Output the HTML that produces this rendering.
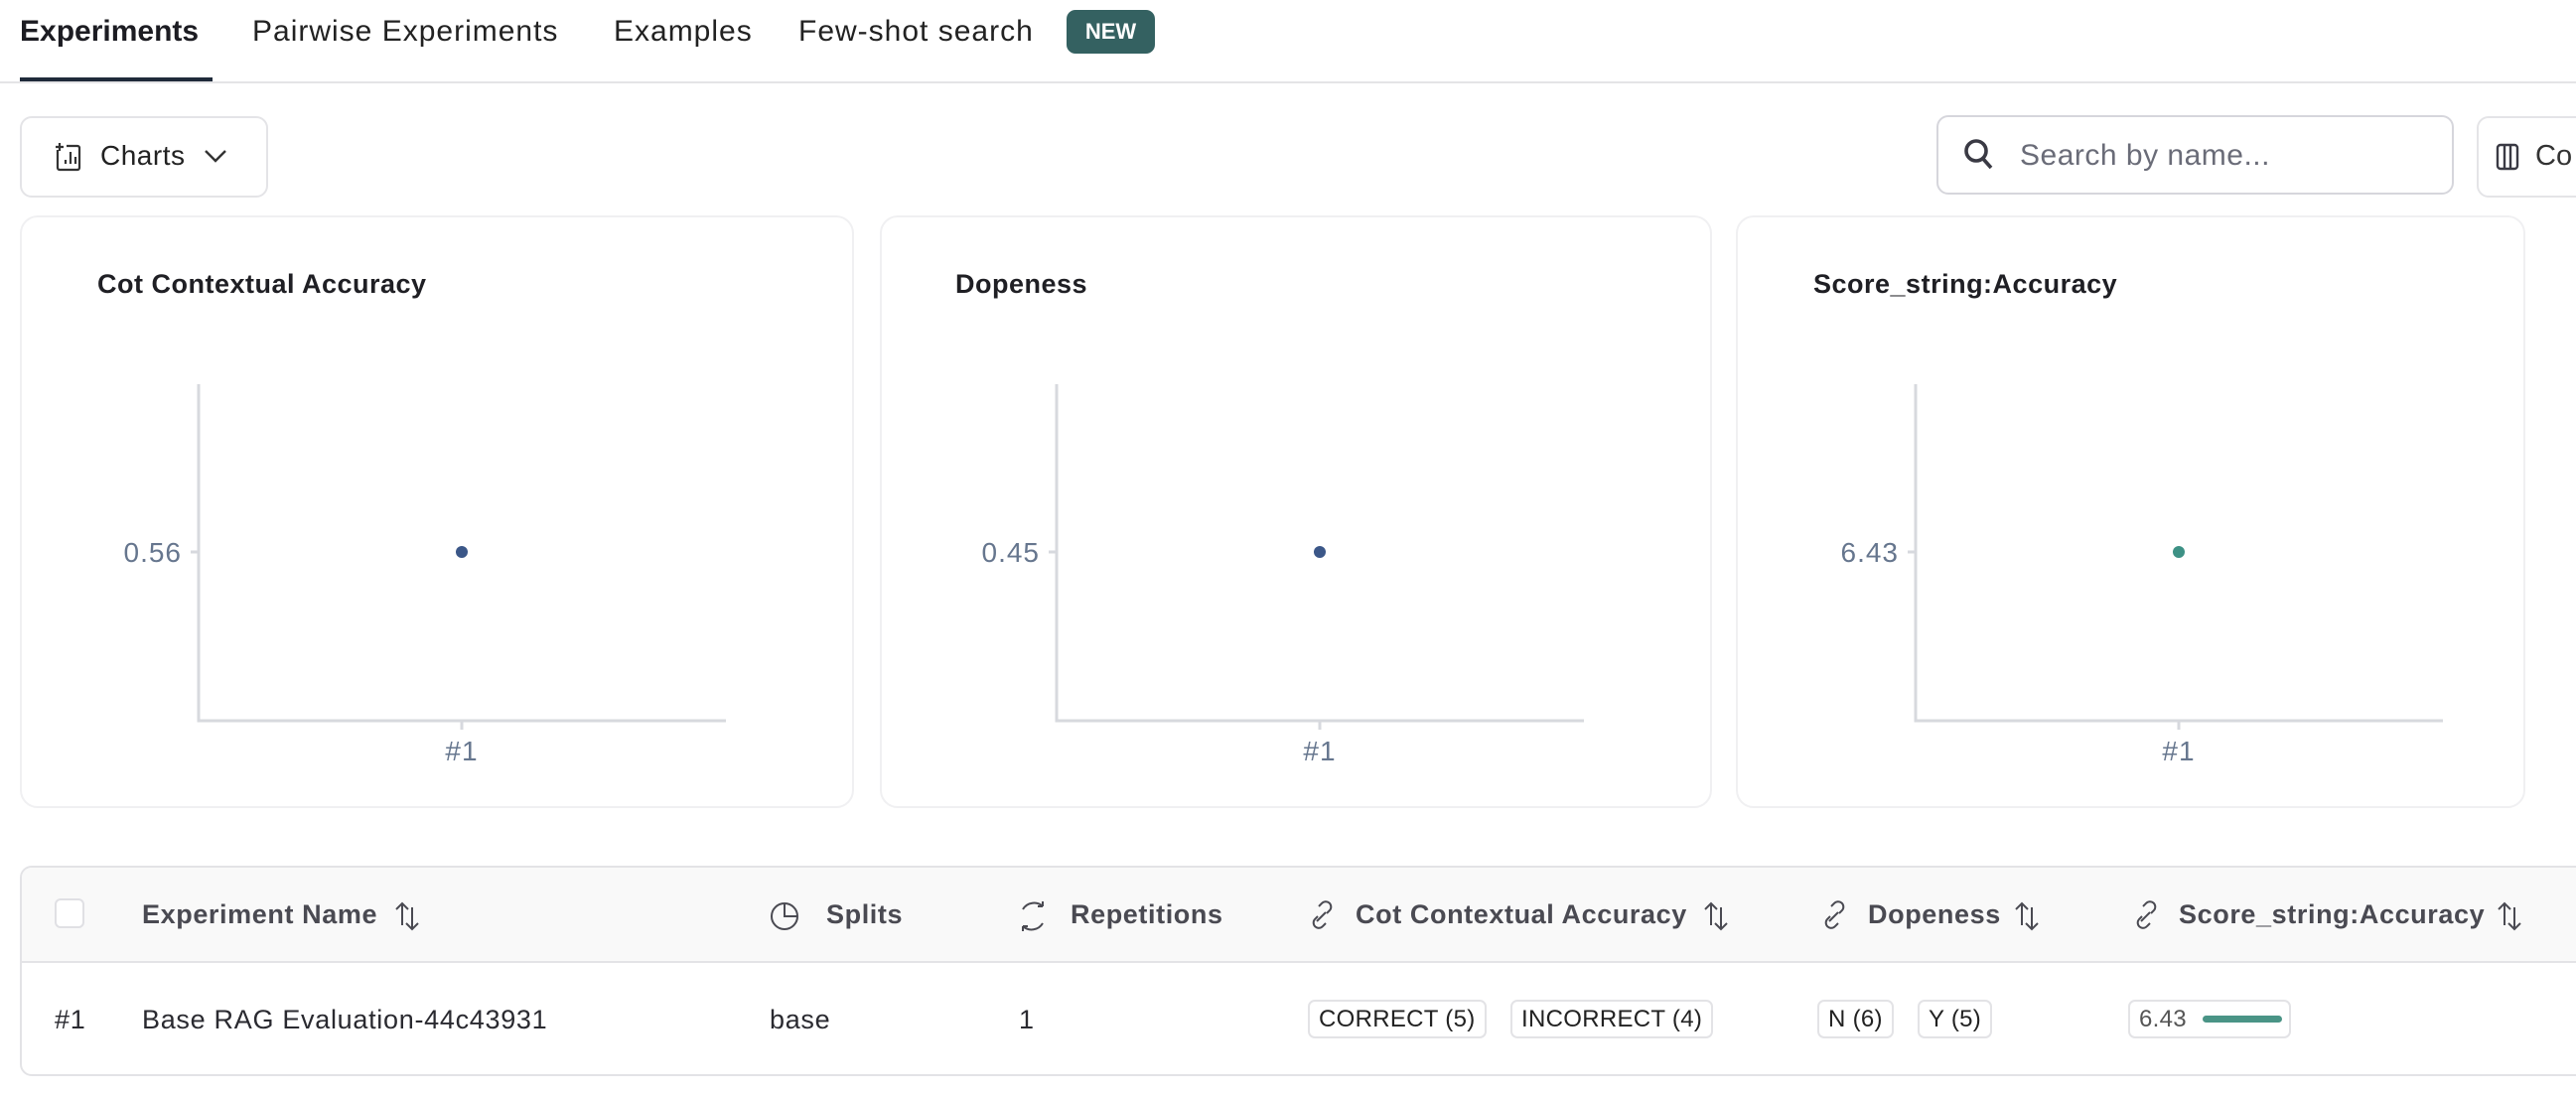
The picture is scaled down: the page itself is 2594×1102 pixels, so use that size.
<!DOCTYPE html>
<html><head><meta charset="utf-8"><style>
*{box-sizing:border-box;margin:0;padding:0}
body{width:2594px;height:1102px;background:#fff;font-family:"Liberation Sans",sans-serif;color:#1d1d22;position:relative;overflow:hidden}
.a{position:absolute;white-space:nowrap}
.tab{font-size:30px;top:15px;color:#222;letter-spacing:1px}
.card{position:absolute;top:217px;height:597px;border:2px solid #f0f0f2;border-radius:18px}
.ct{position:absolute;top:271px;font-size:27px;font-weight:bold;color:#1f1f24;letter-spacing:0.5px}
.hd{font-size:27px;font-weight:bold;color:#4a4a52;top:906px;letter-spacing:0.6px}
.rw{font-size:27px;color:#2a2a30;top:1012px;letter-spacing:0.7px}
.chip{position:absolute;top:1007px;height:39px;border:2px solid #e3e3e6;border-radius:7px;font-size:24px;line-height:35px;padding:0 9px;color:#222;letter-spacing:0.3px}
</style></head><body>
<div class="a tab" style="left:20px;font-weight:bold;color:#1c1c22;letter-spacing:0">Experiments</div>
<div class="a tab" style="left:254px">Pairwise Experiments</div>
<div class="a tab" style="left:618px">Examples</div>
<div class="a tab" style="left:804px">Few-shot search</div>
<div class="a" style="left:1074px;top:10px;width:89px;height:44px;background:#346161;border-radius:9px;color:#fff;font-size:22px;font-weight:bold;line-height:44px;text-align:center">NEW</div>
<div class="a" style="left:20px;top:78px;width:194px;height:5px;background:#1f2a3a"></div>
<div class="a" style="left:0;top:82px;width:2594px;height:2px;background:#e4e4e6"></div>

<div class="a" style="left:20px;top:117px;width:250px;height:82px;border:2px solid #e4e4e7;border-radius:12px"></div>
<svg class="a" style="left:55px;top:143px" width="30" height="30" viewBox="0 0 30 30" fill="none" stroke="#333" stroke-width="2.2"><path d="M3 8v18a2 2 0 0 0 2 2h18a2 2 0 0 0 2-2V6a2 2 0 0 0-2-2H12M11 22v-4M16 22V10M21 22v-7M5 1v8M1 5h8"/></svg>
<div class="a" style="left:101px;top:141px;font-size:28px;color:#222;letter-spacing:0.5px">Charts</div>
<svg class="a" style="left:204px;top:148px" width="26" height="18" viewBox="0 0 26 18" fill="none" stroke="#333" stroke-width="2.4"><path d="M3 4l10 10 10-10"/></svg>

<div class="a" style="left:1950px;top:116px;width:521px;height:80px;border:2px solid #d6d6dc;border-radius:12px"></div>
<svg class="a" style="left:1976px;top:138px" width="34" height="36" viewBox="0 0 34 36" fill="none" stroke="#3a3a44" stroke-width="3.6"><circle cx="14" cy="14" r="10"/><path d="M21 22l8 9"/></svg>
<div class="a" style="left:2034px;top:140px;font-size:30px;color:#6a6c78;letter-spacing:0.5px">Search by name...</div>
<div class="a" style="left:2494px;top:117px;width:140px;height:82px;border:2px solid #e4e4e7;border-radius:12px"></div>
<svg class="a" style="left:2513px;top:144px" width="24" height="28" viewBox="0 0 24 28" fill="none" stroke="#3a3a44" stroke-width="2.4"><rect x="2" y="2" width="20" height="24" rx="3"/><path d="M9 2v24M15 2v24"/></svg>
<div class="a" style="left:2553px;top:141px;font-size:29px;color:#333">Co</div>

<div class="card" style="left:20px;width:840px"></div>
<div class="card" style="left:886px;width:838px"></div>
<div class="card" style="left:1748px;width:795px"></div>
<div class="ct" style="left:98px">Cot Contextual Accuracy</div>
<div class="ct" style="left:962px">Dopeness</div>
<div class="ct" style="left:1826px">Score_string:Accuracy</div>

<svg class="a" style="left:0;top:380px" width="2594" height="410">
<g fill="none" stroke="#d7d9de" stroke-width="3">
<path d="M200 7V346H731"/><path d="M192 176H200"/><path d="M465 346V355"/>
<path d="M1064 7V346H1595"/><path d="M1056 176H1064"/><path d="M1329 346V355"/>
<path d="M1929 7V346H2460"/><path d="M1921 176H1929"/><path d="M2194 346V355"/>
</g>
<circle cx="465" cy="176" r="6" fill="#3b5788"/>
<circle cx="1329" cy="176" r="6" fill="#3b5788"/>
<circle cx="2194" cy="176" r="6" fill="#3d9185"/>
<g font-family="Liberation Sans" font-size="28" fill="#66768e" letter-spacing="1">
<text x="183" y="186" text-anchor="end">0.56</text>
<text x="1047" y="186" text-anchor="end">0.45</text>
<text x="1912" y="186" text-anchor="end">6.43</text>
<text x="465" y="386" text-anchor="middle">#1</text>
<text x="1329" y="386" text-anchor="middle">#1</text>
<text x="2194" y="386" text-anchor="middle">#1</text>
</g></svg>

<div class="a" style="left:20px;top:872px;width:2640px;height:212px;border:2px solid #e3e3e6;border-radius:12px;overflow:hidden">
<div style="height:96px;background:#f9f9f9;border-bottom:2px solid #e3e3e6"></div></div>
<div class="a" style="left:55px;top:905px;width:30px;height:30px;border:2px solid #e0e0e4;border-radius:6px;background:#fff"></div>
<div class="a hd" style="left:143px">Experiment Name</div>
<div class="a hd" style="left:832px">Splits</div>
<div class="a hd" style="left:1078px">Repetitions</div>
<div class="a hd" style="left:1365px">Cot Contextual Accuracy</div>
<div class="a hd" style="left:1881px">Dopeness</div>
<div class="a hd" style="left:2194px">Score_string:Accuracy</div>
<svg class="a" style="left:0;top:900px" width="2594" height="46" fill="none" stroke="#4a4a52" stroke-width="2">
<g id="s"><path d="M405 10v22M399 16l6-6 6 6M415 14v22M409 30l6 6 6-6"/></g>
<use href="#s" x="1318"/><use href="#s" x="1631"/><use href="#s" x="2117"/>
<circle cx="790" cy="23" r="13"/><path d="M790 10v13h13"/>
<path d="M1030 16a13 13 0 0 1 20-3M1050 13v-5M1050 13h-5M1050 30a13 13 0 0 1-20 3M1030 33v5M1030 33h5"/>
<g id="l"><path d="M1328 18l3-3a5 5 0 0 1 8 7l-3 3M1327 28l-3 3a5 5 0 0 0 8 7l3-3M1326 33l9-9" transform="translate(0,-5)"/></g>
<use href="#l" x="516"/><use href="#l" x="830"/>
</svg>
<div class="a rw" style="left:55px">#1</div>
<div class="a rw" style="left:143px">Base RAG Evaluation-44c43931</div>
<div class="a rw" style="left:775px">base</div>
<div class="a rw" style="left:1026px">1</div>
<div class="chip" style="left:1317px">CORRECT (5)</div>
<div class="chip" style="left:1521px">INCORRECT (4)</div>
<div class="chip" style="left:1830px">N (6)</div>
<div class="chip" style="left:1931px">Y (5)</div>
<div class="chip" style="left:2143px;width:164px;color:#555">6.43<span style="position:absolute;left:73px;top:14px;width:80px;height:7px;border-radius:4px;background:#4a9486"></span></div>
</body></html>
